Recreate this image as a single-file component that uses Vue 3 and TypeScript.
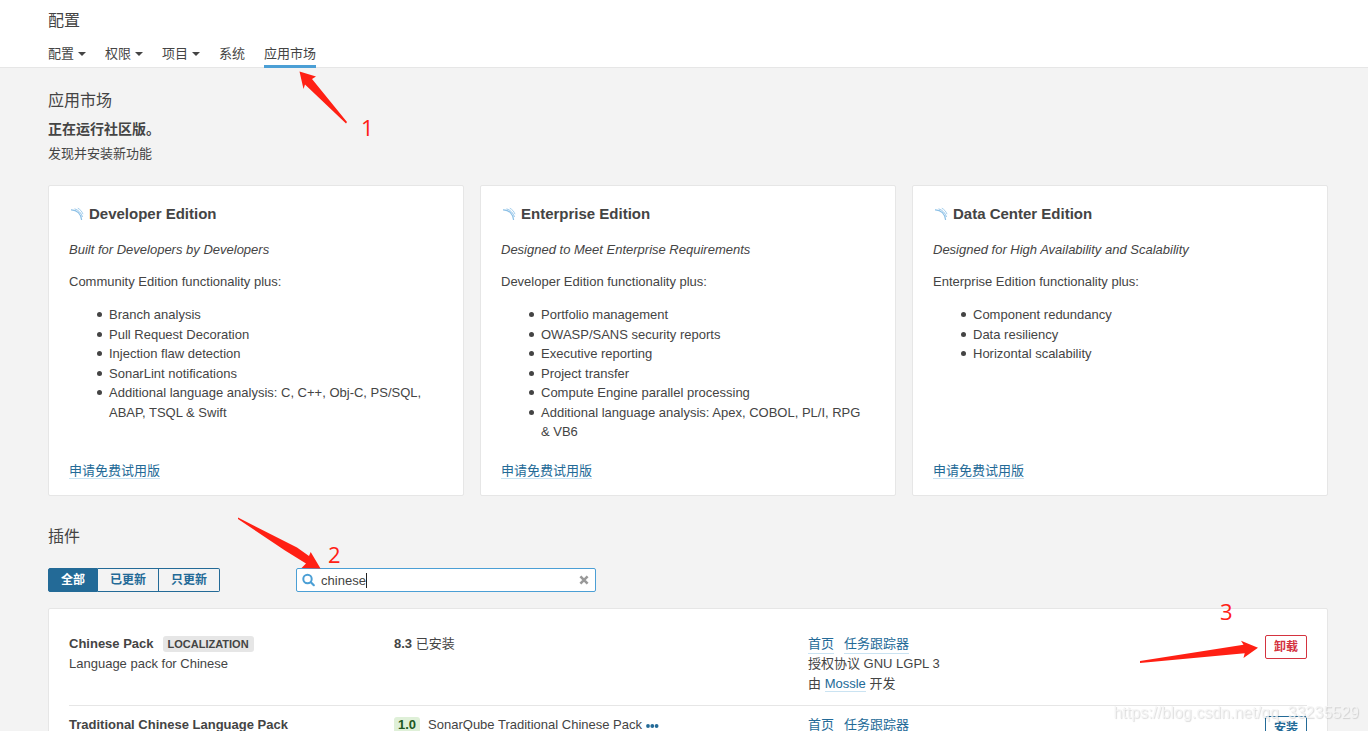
<script setup lang="ts">
import { ref } from 'vue'

interface Edition {
  name: string
  tagline: string
  intro: string
  features: string[]
}

interface Plugin {
  name: string
  tag?: string
  description: string
  installed?: string
  update?: { version: string; text: string }
  license: string
  author: string
  action: string
  danger: boolean
}

const menu = [
  { label: '配置', dropdown: true, active: false },
  { label: '权限', dropdown: true, active: false },
  { label: '项目', dropdown: true, active: false },
  { label: '系统', dropdown: false, active: false },
  { label: '应用市场', dropdown: false, active: true },
]

const editions: Edition[] = [
  {
    name: 'Developer Edition',
    tagline: 'Built for Developers by Developers',
    intro: 'Community Edition functionality plus:',
    features: [
      'Branch analysis',
      'Pull Request Decoration',
      'Injection flaw detection',
      'SonarLint notifications',
      'Additional language analysis: C, C++, Obj-C, PS/SQL, ABAP, TSQL & Swift',
    ],
  },
  {
    name: 'Enterprise Edition',
    tagline: 'Designed to Meet Enterprise Requirements',
    intro: 'Developer Edition functionality plus:',
    features: [
      'Portfolio management',
      'OWASP/SANS security reports',
      'Executive reporting',
      'Project transfer',
      'Compute Engine parallel processing',
      'Additional language analysis: Apex, COBOL, PL/I, RPG & VB6',
    ],
  },
  {
    name: 'Data Center Edition',
    tagline: 'Designed for High Availability and Scalability',
    intro: 'Enterprise Edition functionality plus:',
    features: ['Component redundancy', 'Data resiliency', 'Horizontal scalability'],
  },
]

const filters = ['全部', '已更新', '只更新']
const activeFilter = ref('全部')
const query = ref('chinese')

const plugins: Plugin[] = [
  {
    name: 'Chinese Pack',
    tag: 'LOCALIZATION',
    description: 'Language pack for Chinese',
    installed: '8.3',
    license: 'GNU LGPL 3',
    author: 'Mossle',
    action: '卸载',
    danger: true,
  },
  {
    name: 'Traditional Chinese Language Pack',
    description: 'Language pack for Traditional Chinese',
    update: { version: '1.0', text: 'SonarQube Traditional Chinese Pack' },
    license: 'GNU LGPL 3',
    author: 'Mossle',
    action: '安装',
    danger: false,
  },
]
</script>

<template>
  <div class="page">
    <header class="header">
      <h1>配置</h1>
      <nav class="tabs">
        <a v-for="m in menu" :key="m.label" href="#" :class="{ active: m.active }">
          {{ m.label }}<span v-if="m.dropdown" class="caret"></span>
        </a>
      </nav>
    </header>

    <main class="content">
      <h2>应用市场</h2>
      <p class="running">正在运行社区版。</p>
      <p class="discover">发现并安装新功能</p>

      <section class="editions">
        <article v-for="e in editions" :key="e.name" class="card">
          <h3>
            <svg class="logo" width="16" height="16" viewBox="0 0 16 16" aria-hidden="true">
              <path d="M2 3.8C8 3.6 12.2 8 12.6 14" stroke-width="1.2" />
              <path d="M5.6 2.8C9.4 4 12.5 7.2 13.5 11" stroke-width="0.9" />
              <path d="M8.8 2.2C11.2 3.4 13 5.4 14 8.2" stroke-width="0.8" />
            </svg>
            {{ e.name }}
          </h3>
          <p><em>{{ e.tagline }}</em></p>
          <p>{{ e.intro }}</p>
          <ul>
            <li v-for="f in e.features" :key="f">{{ f }}</li>
          </ul>
          <div class="trial"><a class="link" href="#">申请免费试用版</a></div>
        </article>
      </section>

      <h2>插件</h2>
      <div class="toolbar">
        <div class="filters">
          <button
            v-for="f in filters"
            :key="f"
            type="button"
            :class="{ selected: f === activeFilter }"
            @click="activeFilter = f"
          >{{ f }}</button>
        </div>
        <div class="search">
          <svg width="14" height="14" viewBox="0 0 14 14" aria-hidden="true">
            <circle cx="5.5" cy="6" r="4.2" fill="none" stroke="#4b9fd5" stroke-width="2" />
            <path d="M8.8 9.2L11.8 12.2" stroke="#4b9fd5" stroke-width="2.2" stroke-linecap="round" />
          </svg>
          <div class="field">
            <input v-model="query" type="text" aria-label="搜索" />
            <span class="cursor"></span>
          </div>
          <button type="button" aria-label="清除" @click="query = ''">
            <svg width="10" height="10" viewBox="0 0 10 10" aria-hidden="true">
              <path d="M1.4 1.4L8.6 8.6M8.6 1.4L1.4 8.6" stroke="#999" stroke-width="2.6" />
            </svg>
          </button>
        </div>
      </div>

      <section class="panel">
        <table>
          <tbody>
            <tr v-for="p in plugins" :key="p.name">
              <td class="name">
                <strong>{{ p.name }}</strong><span v-if="p.tag" class="tag">{{ p.tag }}</span>
                <div>{{ p.description }}</div>
              </td>
              <td class="version">
                <template v-if="p.installed"><strong>{{ p.installed }}</strong> 已安装</template>
                <div v-if="p.update" class="update">
                  <span class="badge">{{ p.update.version }}</span>
                  <span>{{ p.update.text }}</span>
                  <button type="button" aria-label="更多">
                    <svg width="14" height="6" viewBox="0 0 14 6" fill="#236a97" aria-hidden="true">
                      <circle cx="3" cy="4" r="1.9" />
                      <circle cx="7.3" cy="4" r="1.9" />
                      <circle cx="11.6" cy="4" r="1.9" />
                    </svg>
                  </button>
                </div>
              </td>
              <td>
                <div class="links">
                  <a class="link" href="#">首页</a>
                  <a class="link" href="#">任务跟踪器</a>
                </div>
                <div>授权协议 {{ p.license }}</div>
                <div>由 <a class="link" href="#">{{ p.author }}</a> 开发</div>
              </td>
              <td class="actions">
                <button type="button" :class="{ danger: p.danger }">{{ p.action }}</button>
              </td>
            </tr>
          </tbody>
        </table>
      </section>
    </main>

    <svg class="notes" width="1368" height="731" viewBox="0 0 1368 731">
      <polygon points="299.5,71.5 316,76.5 312,79 347,122 346,123.5 305,84.5 303.5,89" />
      <polygon points="238,517.5 297,547.5 309,556 310.7,552 320.5,568.5 301.5,568 306,563.5 285,550.5 238,519" />
      <polygon points="1140,661 1243.5,644.7 1241,640.7 1258,647.7 1243.5,658 1244.7,653.3 1140,663" />
      <text x="361" y="136">1</text>
      <text x="328" y="563">2</text>
      <text x="1220" y="620">3</text>
    </svg>
    <div class="watermark">https://blog.csdn.net/qq_33235529</div>
  </div>
</template>

<style>
body {
  margin: 0;
  background: #f3f3f3;
}
</style>

<style scoped>
.page {
  position: relative;
  min-height: 100vh;
  color: #444;
  background: #f3f3f3;
  font: 13px/20px "Liberation Sans", "Noto Sans CJK SC", sans-serif;
}
h1, h2, h3, p, ul {
  margin: 0;
}
h1, h2 {
  font-size: 16px;
  line-height: 24px;
  font-weight: 400;
}
button, input {
  font: inherit;
  color: inherit;
}
.header {
  padding: 9px 48px 0;
  background: #fff;
  border-bottom: 1px solid #e6e6e6;
}
.tabs {
  display: flex;
  gap: 19px;
  margin-top: 10px;
  margin-bottom: -1px;
}
.tabs a {
  display: flex;
  align-items: center;
  color: #444;
  text-decoration: none;
  line-height: 22px;
  border-bottom: 3px solid transparent;
}
.tabs a.active {
  border-color: #4b9fd5;
}
.caret {
  margin-left: 4px;
  border: 4px solid transparent;
  border-top-color: #444;
  border-bottom: 0;
}
.content {
  padding: 21px 40px 40px 48px;
}
.running {
  margin-top: 6px;
  font-size: 14px;
  font-weight: 700;
}
.discover {
  margin-top: 5px;
}
.editions {
  display: grid;
  grid-template-columns: repeat(3, 1fr);
  gap: 16px;
  margin: 21px 0 29px;
}
.card {
  display: flex;
  flex-direction: column;
  box-sizing: border-box;
  min-height: 311px;
  padding: 18px 20px 15px;
  background: #fff;
  border: 1px solid #e6e6e6;
  border-radius: 2px;
  line-height: 1.5;
}
.card h3 {
  display: flex;
  align-items: center;
  gap: 4px;
  font-size: 15px;
  line-height: 20px;
  margin-bottom: 16px;
}
.logo {
  fill: none;
  stroke: #8cc0e6;
}
.card p {
  line-height: 20px;
  margin-bottom: 12px;
}
.card ul {
  padding: 0 8px 0 40px;
  margin-top: 1px;
  list-style: none;
}
.card li {
  position: relative;
}
.card li::before {
  content: "";
  position: absolute;
  left: -12px;
  top: 7px;
  width: 5px;
  height: 5px;
  border-radius: 50%;
  background: #444;
}
.trial {
  margin-top: auto;
}
.link {
  color: #236a97;
  text-decoration: none;
  border-bottom: 1px solid #cae3f2;
}
.toolbar {
  display: flex;
  align-items: center;
  gap: 76px;
  margin: 19px 0 16px;
}
.filters {
  display: flex;
}
.filters button {
  height: 24px;
  padding: 0 12px;
  border: 1px solid #236a97;
  background: transparent;
  color: #236a97;
  font-size: 12px;
  font-weight: 700;
  line-height: 22px;
}
.filters button + button {
  border-left: 0;
}
.filters button:first-child {
  border-radius: 2px 0 0 2px;
}
.filters button:last-child {
  border-radius: 0 2px 2px 0;
}
.filters button.selected {
  background: #236a97;
  color: #fff;
}
.search {
  display: flex;
  align-items: center;
  box-sizing: border-box;
  width: 300px;
  height: 24px;
  padding: 0 6px 0 5px;
  background: #fff;
  border: 1px solid #4b9fd5;
  border-radius: 2px;
}
.field {
  display: flex;
  align-items: center;
  flex: 1;
  margin-left: 5px;
}
.field input {
  field-sizing: content;
  min-width: 0;
  padding: 1px 0 0;
  border: 0;
  outline: 0;
  background: none;
}
.cursor {
  width: 1px;
  height: 15px;
  background: #222;
}
.search button {
  display: flex;
  padding: 0;
  border: 0;
  background: none;
}
.panel {
  padding: 16px 20px;
  background: #fff;
  border: 1px solid #e6e6e6;
  border-radius: 2px;
}
table {
  width: 100%;
  table-layout: fixed;
  border-collapse: separate;
  border-spacing: 0;
}
td {
  padding: 9px 0 11px;
  vertical-align: top;
}
tr + tr td {
  border-top: 1px solid #e6e6e6;
}
.name {
  width: 325px;
}
.version {
  width: 414px;
}
.tag {
  display: inline-block;
  margin-left: 9px;
  padding: 0 5px;
  line-height: 16px;
  font-size: 11px;
  font-weight: 700;
  background: #e6e6e6;
  border-radius: 3px;
}
.update {
  display: flex;
  align-items: center;
}
.badge {
  margin-right: 8px;
  padding: 0 4px;
  line-height: 16px;
  font-weight: 700;
  color: #215821;
  background: #dff0d8;
  border-radius: 3px;
}
.update button {
  display: flex;
  margin-left: 3px;
  padding: 0;
  border: 0;
  background: none;
}
.links {
  display: flex;
  gap: 10px;
}
.links a {
  line-height: 18px;
}
.links {
  height: 20px;
  align-items: center;
}
.actions {
  width: 80px;
  padding-top: 10px;
  text-align: right;
}
.actions button {
  height: 24px;
  padding: 0 8px;
  border: 1px solid #236a97;
  border-radius: 2px;
  background: transparent;
  color: #236a97;
  font-size: 12px;
  font-weight: 700;
  line-height: 22px;
}
.actions button.danger {
  color: #d4333f;
  border-color: #d4333f;
}
.notes {
  position: absolute;
  top: 0;
  left: 0;
  pointer-events: none;
  fill: #ff2014;
  font: 22px "Open Sans", sans-serif;
}
.watermark {
  position: fixed;
  right: 9px;
  bottom: 8px;
  color: rgba(245, 245, 245, 0.85);
  font-size: 16px;
  text-shadow: 1px 1px 1px rgba(0, 0, 0, 0.14);
  pointer-events: none;
}
</style>
